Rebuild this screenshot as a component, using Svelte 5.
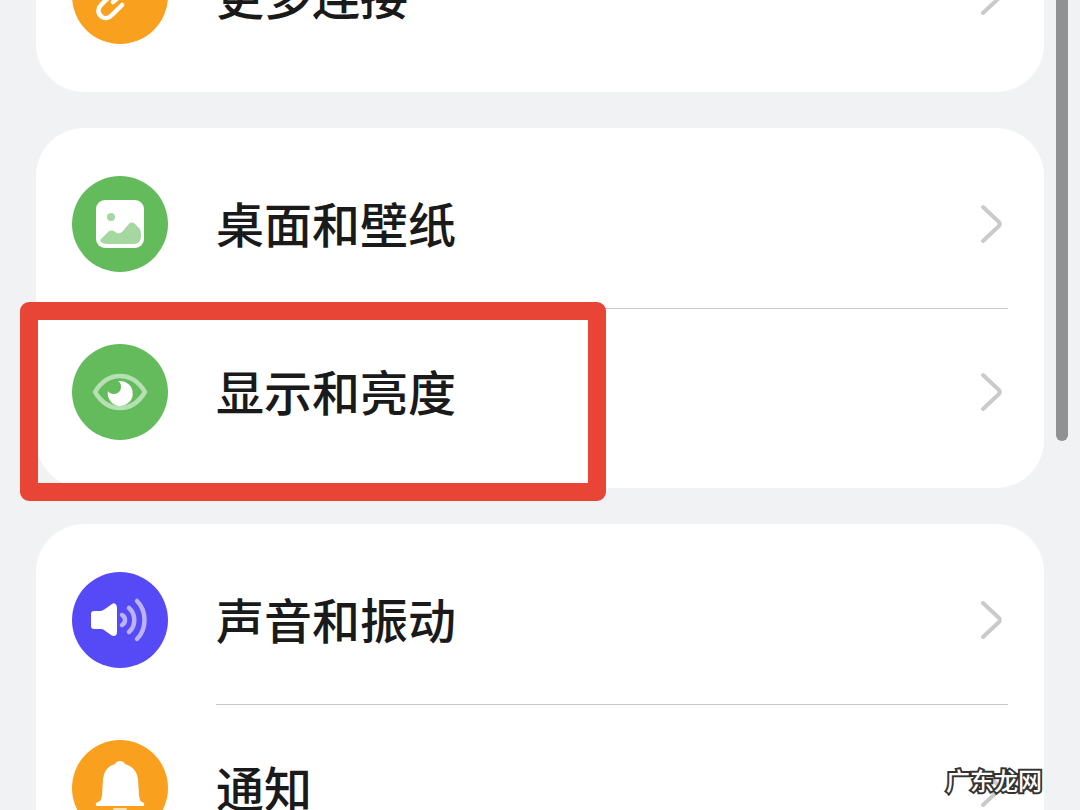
<script lang="ts">
  interface Item {
    id: string;
    label: string;
    tone: 'orange' | 'green' | 'blue';
    marked?: boolean;
  }

  const groups: Item[][] = [
    [{ id: 'link', label: '更多连接', tone: 'orange' }],
    [
      { id: 'wallpaper', label: '桌面和壁纸', tone: 'green' },
      { id: 'display', label: '显示和亮度', tone: 'green', marked: true },
    ],
    [
      { id: 'sound', label: '声音和振动', tone: 'blue' },
      { id: 'notify', label: '通知', tone: 'orange' },
    ],
  ];
</script>

{#snippet glyph(id: string)}
  <svg viewBox="0 0 96 96" fill="none" aria-hidden="true">
    {#if id === 'link'}
      <g stroke="#fff" stroke-width="4.5" stroke-linecap="round" stroke-linejoin="round">
        <path d="M37 49 L29 57 C25 61 26 66 30 69 C33 71 37 70 40 67 L50 57" />
        <path d="M59 47 L67 39 C71 35 70 30 66 27 C63 25 59 26 56 29 L46 39" />
        <path d="M41 54 L55 42" />
      </g>
    {:else if id === 'wallpaper'}
      <rect x="24" y="24" width="48" height="48" rx="9" fill="#fff" />
      <circle cx="39" cy="41" r="4" fill="#a5d7a0" />
      <path
        d="M29 66 C28 65 28 64 29 63 L36 56 C38 54 41 54 43 56 C46 58 48 58 51 55 L56 49 C58 46 61 46 63 48 L67 52 C69 54 69 57 69 61 C68 67 65 68 61 68 H36 C33 68 30 67 29 66 Z"
        fill="#a5d7a0"
      />
    {:else if id === 'display'}
      <path
        d="M23 48 C29 38 38 32 48 32 S67 38 73 48 C67 58 58 64 48 64 S29 58 23 48 Z"
        stroke="#b5e0b1"
        stroke-width="4.5"
        stroke-linejoin="round"
      />
      <path
        d="M48 37 A12.5 12.5 0 1 1 36 47 C37 49 39 50 42 50 C46 50 49 47 49 43 C49 40 48 38 46 37 Z"
        fill="#fff"
      />
    {:else if id === 'sound'}
      <path
        d="M22 39 H28 C30 39 31 38 33 37 L40 32 C43 30 45 33 45 36 V60 C45 64 42 65 39 63 L32 58 C31 57 30 57 28 57 H22 C20 57 19 56 19 54 V42 C19 40 20 39 22 39 Z"
        fill="#fff"
      />
      <g stroke="#bab3fb" stroke-width="4.5" stroke-linecap="round">
        <path d="M50 43 C54 45 54 51 50 53" />
        <path d="M57 36 C64 42 64 54 57 60" />
        <path d="M65 29 C75 39 75 57 65 67" />
      </g>
    {:else}
      <path
        d="M48 21 C50 21 52 22 53 24 C60 26 65 31 66 39 L67 55 C68 60 68 61 70 62 C73 63 73 66 70 66 H26 C23 66 23 63 26 62 C29 61 29 60 30 55 L31 39 C32 31 36 26 43 24 C44 22 46 21 48 21 Z"
        fill="#fff"
      />
      <path d="M41 68 H55 C54 75 42 75 41 68 Z" fill="#fde0b2" />
    {/if}
  </svg>
{/snippet}

<main class="settings">
  <div class="list">
    {#each groups as group}
      <section class="card">
        {#each group as item (item.id)}
          <div class="item">
            <button type="button" class="row">
              <span class="icon {item.tone}">{@render glyph(item.id)}</span>
              <span class="label">{item.label}</span>
              <svg class="chevron" viewBox="0 0 24 42" fill="none" aria-hidden="true">
                <path
                  d="M4 4 L20 19 C21 20 21 22 20 23 L4 38"
                  stroke="#cacacb"
                  stroke-width="4"
                  stroke-linecap="round"
                />
              </svg>
            </button>
            {#if item.marked}
              <div class="marker"></div>
            {/if}
          </div>
        {/each}
      </section>
    {/each}
  </div>
  <div class="scrollbar"></div>
  <div class="watermark">广东龙网</div>
</main>

<style>
  :global(body) {
    background: #f1f2f4;
  }
  .settings {
    position: relative;
    height: 100vh;
    overflow: hidden;
    font-family: "Noto Sans CJK SC", sans-serif;
    color: #1a1a1a;
  }
  /* list is scrolled down by 100px */
  .list {
    display: flex;
    flex-direction: column;
    gap: 36px;
    margin-top: -100px;
    padding: 0 36px;
  }
  .card {
    padding: 12px 36px;
    border-radius: 48px;
    background: #fff;
  }
  .item {
    position: relative;
  }
  .row {
    display: flex;
    align-items: center;
    gap: 48px;
    width: 100%;
    height: 168px;
    padding: 0;
    border: 0;
    background: none;
    color: inherit;
    font: inherit;
    text-align: left;
    cursor: pointer;
  }
  .item + .item::before {
    content: "";
    position: absolute;
    top: 0;
    left: 144px;
    right: 0;
    height: 1px;
    background: #c8c8c9;
  }
  .icon {
    flex: none;
    width: 96px;
    height: 96px;
    border-radius: 50%;
  }
  .icon svg {
    display: block;
    width: 100%;
  }
  .orange {
    background: #f9a11f;
  }
  .green {
    background: #64bb5c;
  }
  .blue {
    background: #564af7;
  }
  .label {
    flex: 1;
    padding-bottom: 4px;
    font-size: 48px;
    font-weight: 500;
    line-height: 72px;
  }
  .chevron {
    flex: none;
    width: 24px;
    height: 42px;
    margin-right: 5px;
  }
  .marker {
    position: absolute;
    z-index: 1;
    top: -6px;
    left: -52px;
    box-sizing: border-box;
    width: 586px;
    height: 199px;
    border: 18px solid #e94536;
    border-radius: 9px;
    pointer-events: none;
  }
  .scrollbar {
    position: absolute;
    top: -12px;
    right: 12px;
    width: 12px;
    height: 453px;
    border-radius: 6px;
    background: #909193;
  }
  .watermark {
    position: absolute;
    right: 38px;
    bottom: 12px;
    color: #fff;
    font-size: 24px;
    font-weight: 500;
    line-height: 36px;
    -webkit-text-stroke: 4px #333;
    paint-order: stroke fill;
  }
</style>
